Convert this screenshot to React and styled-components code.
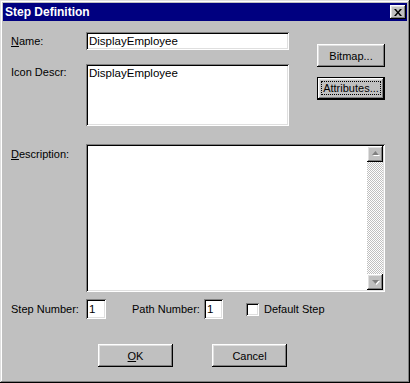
import styled, { createGlobalStyle } from "styled-components";

const GlobalStyle = createGlobalStyle`
    html, body {
        margin: 0;
        padding: 0;
        background: #c0c0c0;
    }
    * {
        box-sizing: border-box;
    }
`;

const raised = `
    box-shadow: inset -1px -1px #000, inset 1px 1px #fff,
        inset -2px -2px #808080, inset 2px 2px #dfdfdf;
`;

const sunken = `
    box-shadow: inset 1px 1px #808080, inset -1px -1px #fff,
        inset 2px 2px #000, inset -2px -2px #dfdfdf;
`;

const ArrowIcon = ({ down }) => (
    <svg width="9" height="6" viewBox="0 0 9 6">
        {down ? (
            <>
                <path d="M2 2h7l-3.5 4z" fill="#fff" />
                <path d="M1 1h7l-3.5 4z" fill="#808080" />
            </>
        ) : (
            <>
                <path d="M2 5h7l-3.5-4z" fill="#fff" />
                <path d="M1 4h7l-3.5-4z" fill="#808080" />
            </>
        )}
    </svg>
);

const App = () => {
    return (
        <>
            <GlobalStyle />
            <Window>
                <TitleBar>
                    <Title>Step Definition</Title>
                    <CloseButton>
                        <svg width="8" height="7" viewBox="0 0 8 7">
                            <path d="M0 0h2l2 2.5L6 0h2L5 3.5 8 7H6L4 4.5 2 7H0l3-3.5z" fill="#000" />
                        </svg>
                    </CloseButton>
                </TitleBar>
                <Body>
                    <TopSection>
                        <FieldGrid>
                            <Label>
                                <U>N</U>ame:
                            </Label>
                            <Field $height={18}>DisplayEmployee</Field>
                            <Label $top={2}>Icon Descr:</Label>
                            <Field $height={62} $multiline>DisplayEmployee</Field>
                        </FieldGrid>
                        <SideButtons>
                            <Button>Bitmap...</Button>
                            <Button $default>
                                <FocusRing>Attributes...</FocusRing>
                            </Button>
                        </SideButtons>
                    </TopSection>

                    <DescriptionRow>
                        <Label $top={4}>
                            <U>D</U>escription:
                        </Label>
                        <DescriptionBox>
                            <DescriptionText />
                            <ScrollBar>
                                <ScrollButton>
                                    <ArrowIcon />
                                </ScrollButton>
                                <ScrollTrack />
                                <ScrollButton>
                                    <ArrowIcon down />
                                </ScrollButton>
                            </ScrollBar>
                        </DescriptionBox>
                    </DescriptionRow>

                    <NumberRow>
                        <InlineLabel $width={75}>Step Number:</InlineLabel>
                        <SmallField $width={20}>1</SmallField>
                        <InlineLabel $width={72} $gapLeft={26}>Path Number:</InlineLabel>
                        <SmallField $width={19}>1</SmallField>
                        <CheckBox />
                        <CheckLabel>Default Step</CheckLabel>
                    </NumberRow>

                    <ButtonRow>
                        <Button $width={75}>
                            <U>O</U>K
                        </Button>
                        <Button $width={75}>Cancel</Button>
                    </ButtonRow>
                </Body>
            </Window>
        </>
    );
};

const Window = styled.div`
    width: 410px;
    height: 383px;
    padding: 3px;
    background: #c0c0c0;
    font-family: "Liberation Sans", Arial, sans-serif;
    font-size: 11px;
    color: #000;
    box-shadow: inset -1px -1px #000, inset 1px 1px #dfdfdf,
        inset -2px -2px #808080, inset 2px 2px #fff;
`;

const TitleBar = styled.div`
    height: 18px;
    background: #000080;
    display: flex;
    align-items: center;
    justify-content: space-between;
    padding: 0 1px 0 2px;
`;

const Title = styled.span`
    color: #fff;
    font-weight: bold;
    font-size: 12px;
`;

const CloseButton = styled.div`
    width: 16px;
    height: 14px;
    background: #c0c0c0;
    display: flex;
    align-items: center;
    justify-content: center;
    ${raised}
`;

const Body = styled.div`
    padding: 11px 0 0 8px;
`;

const TopSection = styled.div`
    display: flex;
`;

const FieldGrid = styled.div`
    display: grid;
    grid-template-columns: 75px 203px;
    row-gap: 14px;
`;

const Label = styled.div`
    display: flex;
    align-items: ${(p) => (p.$top ? "flex-start" : "center")};
    padding-top: ${(p) => p.$top || 0}px;
    white-space: nowrap;
`;

const U = styled.span`
    text-decoration: underline;
`;

const Field = styled.div`
    height: ${(p) => p.$height}px;
    background: #fff;
    font-size: 11.5px;
    padding: ${(p) => (p.$multiline ? "3px 3px" : "0 3px")};
    display: flex;
    align-items: ${(p) => (p.$multiline ? "flex-start" : "center")};
    ${sunken}
`;

const SideButtons = styled.div`
    margin-left: 28px;
    padding-top: 12px;
    display: flex;
    flex-direction: column;
    gap: 10px;
`;

const Button = styled.div`
    width: ${(p) => p.$width || 68}px;
    height: 23px;
    background: #c0c0c0;
    border: ${(p) => (p.$default ? "1px solid #000" : "none")};
    padding: 2px;
    display: flex;
    align-items: center;
    justify-content: center;
    ${raised}
`;

const FocusRing = styled.span`
    flex: 1;
    align-self: stretch;
    margin: 1px 1px 2px 1px;
    border: 1px dotted #000;
    display: flex;
    align-items: center;
    justify-content: center;
`;

const DescriptionRow = styled.div`
    display: flex;
    margin-top: 18px;
    & > ${Label} {
        width: 75px;
    }
`;

const DescriptionBox = styled.div`
    width: 299px;
    height: 148px;
    background: #fff;
    padding: 2px;
    display: flex;
    ${sunken}
`;

const DescriptionText = styled.div`
    flex: 1;
`;

const ScrollBar = styled.div`
    width: 16px;
    display: flex;
    flex-direction: column;
`;

const ScrollButton = styled.div`
    width: 16px;
    height: 16px;
    background: #c0c0c0;
    display: flex;
    align-items: center;
    justify-content: center;
    ${raised}
`;

const ScrollTrack = styled.div`
    flex: 1;
    background: repeating-conic-gradient(#c0c0c0 0 25%, #fff 0 50%) 0 0 / 2px 2px;
`;

const NumberRow = styled.div`
    display: flex;
    align-items: center;
    height: 20px;
    margin-top: 7px;
`;

const InlineLabel = styled.span`
    width: ${(p) => p.$width}px;
    margin-left: ${(p) => p.$gapLeft || 0}px;
    white-space: nowrap;
`;

const SmallField = styled.div`
    width: ${(p) => p.$width}px;
    height: 20px;
    background: #fff;
    font-size: 11.5px;
    padding: 0 3px;
    display: flex;
    align-items: center;
    ${sunken}
`;

const CheckBox = styled.div`
    width: 13px;
    height: 13px;
    margin-left: 23px;
    background: #fff;
    ${sunken}
`;

const CheckLabel = styled.span`
    margin-left: 5px;
`;

const ButtonRow = styled.div`
    display: flex;
    gap: 39px;
    margin-top: 25px;
    padding-left: 87px;
`;

export default App;
